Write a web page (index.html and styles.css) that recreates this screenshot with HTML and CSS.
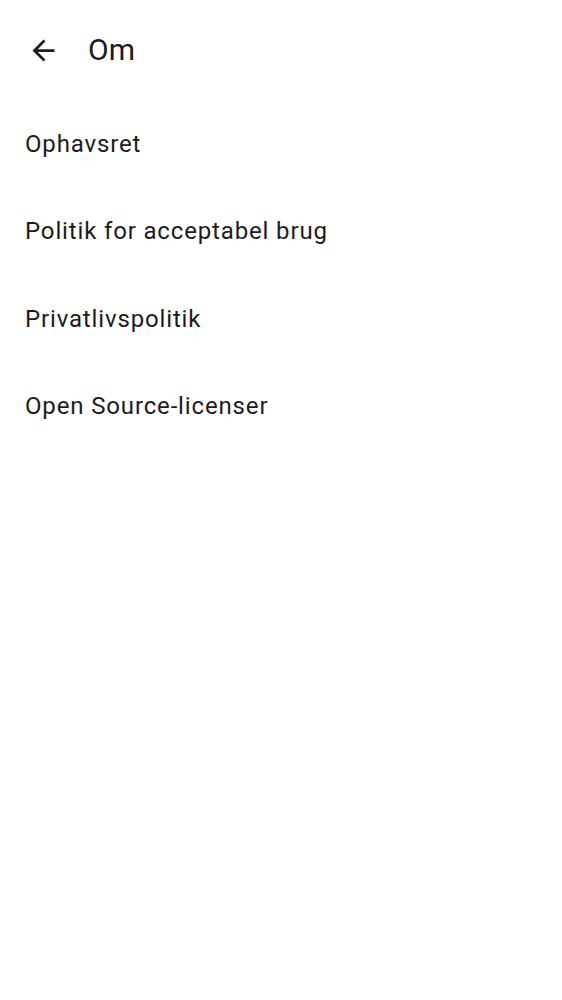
FILE: index.html
```html
<!DOCTYPE html>
<html lang="da">
<head>
<meta charset="utf-8">
<title>Om</title>
<link rel="stylesheet" href="styles.css">
</head>
<body>
<header class="topbar">
  <button class="back" aria-label="Tilbage">
    <svg viewBox="0 0 24 24" width="33" height="33"><path d="M20 11H7.83l5.59-5.59L12 4l-8 8 8 8 1.41-1.41L7.83 13H20v-2z" fill="#1d1b20"/></svg>
  </button>
  <h1 class="title">Om</h1>
</header>
<ul class="list">
  <li class="item">Ophavsret</li>
  <li class="item">Politik for acceptabel brug</li>
  <li class="item">Privatlivspolitik</li>
  <li class="item">Open Source-licenser</li>
</ul>
</body>
</html>
```
FILE: styles.css
```css
html, body {
  margin: 0;
  padding: 0;
  background: #ffffff;
}
body {
  font-family: Roboto, "Noto Sans", sans-serif;
  color: #1d1b20;
}
.topbar {
  height: 100px;
  display: flex;
  align-items: center;
  padding-left: 27px;
}
.back {
  width: 33px;
  height: 33px;
  padding: 0;
  border: 0;
  background: none;
  display: flex;
}
.title {
  margin: 0 0 0 28px;
  font-size: 30px;
  font-weight: 400;
  line-height: 1;
}
.list {
  list-style: none;
  margin: 0;
  padding: 0;
}
.item {
  height: 87.5px;
  display: flex;
  align-items: center;
  padding-left: 25px;
  font-size: 24px;
  letter-spacing: 0.85px;
}
```
